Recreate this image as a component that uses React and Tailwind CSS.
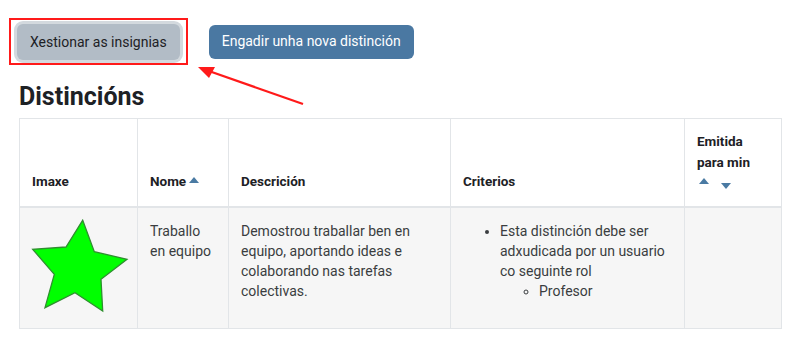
import React from 'react';

const SortUp = () => (
  <svg width="10" height="6" viewBox="0 0 10 6" className="block">
    <path d="M0 6 L5 0 L10 6 Z" fill="#4a7aa3" />
  </svg>
);

const SortDown = () => (
  <svg width="10" height="6" viewBox="0 0 10 6" className="block">
    <path d="M0 0 L5 6 L10 0 Z" fill="#4a7aa3" />
  </svg>
);

const Star = () => (
  <svg width="98" height="96" viewBox="0 0 98 96">
    <polygon
      points="51.7,2.3 63.3,33.7 96,41.3 70,61.3 71.7,93 44,74.7 14,89.7 23.3,56.3 1.7,31.3 35,29"
      fill="#00ff00"
      stroke="#2f8f2f"
      strokeWidth="1.3"
      strokeLinejoin="miter"
    />
  </svg>
);

export default function App() {
  return (
    <div
      className="relative w-[800px] h-[358px] bg-white text-[#1d2125]"
      style={{ fontFamily: 'Roboto, "Liberation Sans", sans-serif' }}
    >
      <div className="pl-[19px] pr-[18px] pt-[18px]">
        <div className="flex items-center gap-[21px]">
          <div className="-ml-[10px] border-2 border-[#ff1a1a] px-[6px] pt-[4px] pb-[3px]">
            <button className="h-[36px] px-[13px] rounded-[6px] bg-[#b2bcc6] ring-[3px] ring-[#d3d9de] text-[14px] text-[#1d2125]">
              Xestionar as insignias
            </button>
          </div>
          <button className="h-[34px] px-[13px] rounded-[6px] bg-[#4a78a2] text-[14px] text-white">
            Engadir unha nova distinción
          </button>
        </div>

        <h2 className="mt-[17px] text-[25px] font-bold leading-[30px]">Distincións</h2>

        <table className="mt-[6px] w-[763px] border-collapse text-[14px]">
          <thead>
            <tr className="h-[88px] align-bottom">
              <th className="w-[118px] border border-[#e2e5e8] border-b-2 px-[12px] pb-[14px] text-left font-bold text-[13.5px]">Imaxe</th>
              <th className="w-[91px] border border-[#e2e5e8] border-b-2 px-[12px] pb-[14px] text-left font-bold text-[13.5px]">
                Nome <span className="relative -top-[3px] -ml-[1px] inline-block"><SortUp /></span>
              </th>
              <th className="w-[222px] border border-[#e2e5e8] border-b-2 px-[12px] pb-[14px] text-left font-bold text-[13.5px]">Descrición</th>
              <th className="w-[234px] border border-[#e2e5e8] border-b-2 px-[12px] pb-[14px] text-left font-bold text-[13.5px]">Criterios</th>
              <th className="border border-[#e2e5e8] border-b-2 px-[12px] pb-[14px] text-left font-bold text-[13.5px] leading-[21px]">
                Emitida<br />para min
                <div className="flex items-start gap-[12px] h-[19px] pl-[2px]">
                  <span className="pt-[5px]"><SortUp /></span>
                  <span className="pt-[10px]"><SortDown /></span>
                </div>
              </th>
            </tr>
          </thead>
          <tbody>
            <tr className="h-[122px] align-top bg-[#f6f6f6] text-[#3a3d40] leading-[20px]">
              <td className="border border-[#e2e5e8] pl-[11px] pt-[10px]"><Star /></td>
              <td className="border border-[#e2e5e8] px-[12px] pt-[13px]">Traballo en equipo</td>
              <td className="border border-[#e2e5e8] px-[12px] pt-[13px]">
                Demostrou traballar ben en equipo, aportando ideas e colaborando nas tarefas colectivas.
              </td>
              <td className="border border-[#e2e5e8] pl-[12px] pr-[8px] pt-[13px]">
                <ul className="list-disc pl-[37px]">
                  <li>
                    Esta distinción debe ser adxudicada por un usuario co seguinte rol
                    <ul className="list-[circle] pl-[39px]">
                      <li>Profesor</li>
                    </ul>
                  </li>
                </ul>
              </td>
              <td className="border border-[#e2e5e8]"></td>
            </tr>
          </tbody>
        </table>
      </div>

      <svg className="absolute left-0 top-0 pointer-events-none" width="800" height="358">
        <line x1="303" y1="104" x2="206" y2="70" stroke="#ff1a1a" strokeWidth="2.2" />
        <polygon points="198,67 215,67 209,78" fill="#ff1a1a" />
      </svg>
    </div>
  );
}
